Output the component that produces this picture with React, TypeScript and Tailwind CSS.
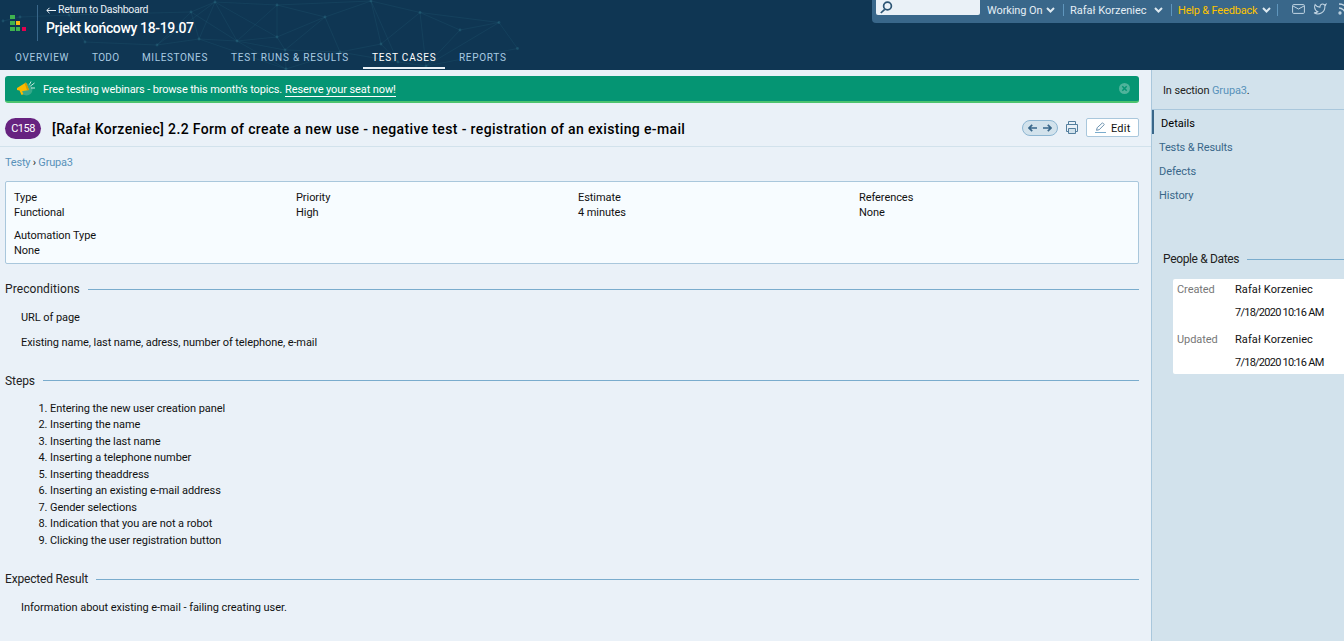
import React from "react";

const nodes: [number, number][] = [
  [3, 21], [20, 17], [69, 15], [85, 42], [191, 12], [215, 2], [277, 5], [277, 37], [237, 41],
  [285, 50], [199, 39], [157, 45], [325, 17], [371, 1], [420, 12.5], [460, 30], [499, 22.5],
  [517.5, 48.5], [381, 44], [340, 52], [398, 62], [426, 66], [286, 69],
];
const links: [number, number][] = [
  [0, 1], [1, 2], [2, 3], [2, 4], [3, 11], [4, 11], [4, 5], [4, 10], [5, 6], [5, 8], [5, 11], [5, 10], [6, 7], [6, 12],
  [7, 8], [8, 10], [8, 9], [7, 9], [10, 11], [12, 7], [12, 19], [12, 13], [12, 9], [13, 18], [13, 14], [13, 6],
  [14, 18], [14, 15], [14, 16], [15, 16], [16, 17], [15, 21], [14, 21], [18, 19], [18, 20], [20, 21], [17, 21],
  [19, 20], [9, 19], [9, 22], [8, 22], [10, 22], [13, 20], [19, 22], [16, 21], [6, 8], [4, 8], [5, 7],
];

const Network = () => (
  <svg className="pointer-events-none absolute left-0 top-0" width="530" height="70">
    {links.map(([a, b], i) => (
      <line key={i} x1={nodes[a][0]} y1={nodes[a][1]} x2={nodes[b][0]} y2={nodes[b][1]} stroke="#2d7186" strokeOpacity="0.18" />
    ))}
    {nodes.map(([x, y], i) => (
      <circle key={i} cx={x} cy={y} r="1.4" fill="#2d7186" fillOpacity="0.4" />
    ))}
  </svg>
);

const Chevron = () => (
  <svg className="shrink-0" width="9" height="6" viewBox="0 0 9 6" fill="none" stroke="#dce8f0" strokeWidth="2">
    <path d="M1 1l3.5 3.5L8 1" />
  </svg>
);

const Section = ({ title, className, titleClass }: { title: string; className?: string; titleClass?: string }) => (
  <div className={`flex h-5 items-center gap-2 ${className ?? ""}`}>
    <h2 className={`whitespace-nowrap text-[12px] leading-5 text-[#222] ${titleClass ?? ""}`}>{title}</h2>
    <div className="h-px flex-1 bg-[#7aaccd]" />
  </div>
);

const fields = [
  ["Type", "Functional"],
  ["Priority", "High"],
  ["Estimate", "4 minutes"],
  ["References", "None"],
  ["Automation Type", "None"],
];

const steps = [
  "Entering the new user creation panel",
  "Inserting the name",
  "Inserting the last name",
  "Inserting a telephone number",
  "Inserting theaddress",
  "Inserting an existing e-mail address",
  "Gender selections",
  "Indication that you are not a robot",
  "Clicking the user registration button",
];

const Header = () => (
  <header className="relative flex h-[70px] shrink-0 justify-between bg-[#0f3653]">
    <Network />
    <div className="relative flex flex-col">
      <div className="flex h-[45px] pt-[5px]">
        <svg className="ml-[10px] mt-[10px]" width="17" height="16" shapeRendering="crispEdges">
          <path d="M0 0h5v4H0zM0 6h5v4H0zM0 12h5v4H0zM6 12h4v4H6z" fill="#3fb34f" />
          <path d="M6 6h4v4H6z" fill="#fdb813" />
          <path d="M12 12h4v4h-4z" fill="#e4004f" />
        </svg>
        <div className="ml-[10px] h-[36px] w-px bg-[#39678a]" />
        <div className="ml-2 -mt-[2px] text-white">
          <a className="flex h-[14px] items-center text-[10.5px] leading-[14px] tracking-[-0.3px] text-[#eaf1f7]">
            <svg className="mr-[2px]" width="10" height="7" viewBox="0 0 10 7" fill="none" stroke="currentColor">
              <path d="M10 3.500H1M3.500 .8L.8 3.500l2.700 2.700" />
            </svg>
            Return to Dashboard
          </a>
          <h1 className="mt-[2px] text-[14px] font-medium leading-[18px] tracking-[-0.350px]">Prjekt końcowy 18-19.07</h1>
        </div>
      </div>
      <nav className="flex h-[24px] items-center whitespace-nowrap pl-[15px] text-[10px] tracking-[0.700px] text-[#a9cbe2]">
        <a className="w-[77px]">OVERVIEW</a>
        <a className="w-[50px] tracking-[0.300px]">TODO</a>
        <a className="w-[89px] tracking-[0.600px]">MILESTONES</a>
        <a className="w-[132px] tracking-[0.800px]">TEST RUNS &amp; RESULTS</a>
        <a className="h-[24px] w-[82px] border-b-2 border-[#eaf1f7] pl-[9px] leading-[25px] tracking-[0.8px] text-white">TEST CASES</a>
        <a className="ml-[14px]">REPORTS</a>
      </nav>
    </div>
    <div className="flex h-[23px] w-[472px] overflow-hidden rounded-bl-sm bg-[#39678a] pl-1 text-[11px] tracking-normal text-[#e4eef5]">
      <div className="h-[15px] w-[104px] shrink-0 rounded-b-xs bg-[#eaf1f7]">
        <svg className="ml-1 mt-px" width="13" height="14" viewBox="0 0 13 14" fill="none" stroke="#2b5473" strokeWidth="1.700">
          <circle cx="7.500" cy="5" r="3.900" />
          <path d="M4.700 8.300L.8 12" />
        </svg>
      </div>
      <div className="flex h-5 shrink-0 items-center whitespace-nowrap">
        <span className="ml-[7px] w-[59px] pt-[2px] tracking-[-0.1px]">Working On</span><Chevron />
        <i className="ml-2 mr-[6px] h-3 w-px bg-[#5f96bd]" />
        <span className="w-[84px] pt-[2px]">Rafał Korzeniec</span><Chevron />
        <i className="ml-2 mr-[6px] h-3 w-px bg-[#5f96bd]" />
        <span className="w-[84px] pt-[2px] tracking-[-0.180px] text-[#fdc400]">Help &amp; Feedback</span><Chevron />
        <i className="ml-[6px] mr-[14px] h-3 w-px bg-[#5f96bd]" />
        <svg width="13" height="10" viewBox="0 0 13 10" fill="none" stroke="#c2d5e3" className="-mt-[3px]">
          <rect x=".6" y=".6" width="11.800" height="8.800" rx="1" />
          <path d="M1 2l5.500 3L12 2" />
        </svg>
        <svg className="-mt-[3px] ml-[8px]" width="14" height="12" viewBox="0 0 24 22" fill="none" stroke="#c2d5e3" strokeWidth="1.900">
          <path d="M23 2a11 11 0 0 1-3.140 1.530A4.480 4.480 0 0 0 12 6.530v1A10.700 10.700 0 0 1 3 3s-4 9 5 13a11.600 11.600 0 0 1-7 2c9 5 20 0 20-11.500 0-.28 0-.56-.1-.83A7.700 7.700 0 0 0 23 2z" />
        </svg>
        <svg className="-mt-[3px] ml-[11px]" width="12" height="12" viewBox="0 0 12 12" fill="none" stroke="#c2d5e3" strokeWidth="1.300">
          <path d="M1 1a10 10 0 0 1 10 10M1 5a6 6 0 0 1 6 6" />
          <circle cx="2" cy="10" r="1" />
        </svg>
      </div>
    </div>
  </header>
);

const Banner = () => (
  <div className="ml-[5px] mr-[12px] flex h-[27px] items-center rounded-[3px] border-b-2 border-[#4cc36f] bg-[#059573] pl-[11px] pr-[9px] text-[11px] text-white">
    <svg width="19" height="17" viewBox="0 0 19 17">
      <circle cx="10.500" cy="9.500" r="6" fill="#36a88b" />
      <path d="M1 8L10 2.500l3 7.500-7 1.200 1.500 3-2 .8-2-4.500L1 10z" fill="#fbb900" />
      <path d="M10 2.500l3 7.500-2 .3-2.300-7z" fill="#d79b00" />
      <path d="M13.500 4.500l1.500-3M14.500 6l4-3M15 8h4" stroke="#c9e8df" strokeWidth="1" />
    </svg>
    <span className="ml-2 pt-[3px] tracking-[-0.150px]">Free testing webinars - browse this month’s topics.</span>
    <a className="ml-[3px] mt-[3px] border-b border-white leading-[12px] tracking-[-0.1px]">Reserve your seat now!</a>
    <svg className="ml-auto" width="11" height="11" viewBox="0 0 11 11">
      <circle cx="5.500" cy="5.500" r="5.500" fill="#4fb39b" />
      <path d="M3.300 3.300l4.400 4.400M7.700 3.300L3.300 7.700" stroke="#059573" strokeWidth="1.500" />
    </svg>
  </div>
);

const Sidebar = () => (
  <aside className="w-[193px] shrink-0 overflow-hidden border-l border-[#a9c7dc] bg-[#d2e2ec] text-[11px]">
    <div className="h-[40px] border-b border-[#a9c7dc] pl-[11px] leading-[41px] tracking-[-0.130px] text-[#222]">
      In section <a className="text-[#5992ba]">Grupa3</a>.
    </div>
    <nav className="leading-[27px] text-[#39678a]">
      <a className="block h-6 border-l-2 border-[#39678a] pl-[7px] tracking-[0.050px] text-black">Details</a>
      <a className="block h-6 pl-[7px] tracking-[-0.130px]">Tests &amp; Results</a>
      <a className="block h-6 pl-[7px]">Defects</a>
      <a className="block h-6 pl-[7px]">History</a>
    </nav>
    <Section title="People & Dates" className="mt-[43px] pl-[11px]" titleClass="tracking-[-0.350px]" />
    <dl className="ml-[21px] mt-[10px] grid h-[95px] grid-cols-[58px_1fr] grid-rows-[23px_27px_23px_22px] whitespace-nowrap rounded-l-xs bg-white pl-1 leading-[21px] text-[#111]">
      <dt className="text-[#777]">Created</dt><dd className="tracking-[0.090px]">Rafał Korzeniec</dd>
      <dt /><dd className="tracking-[-0.750px]">7/18/2020 10:16 AM</dd>
      <dt className="text-[#777]">Updated</dt><dd className="tracking-[0.090px]">Rafał Korzeniec</dd>
      <dt /><dd className="tracking-[-0.750px]">7/18/2020 10:16 AM</dd>
    </dl>
  </aside>
);

export default function App() {
  return (
    <div className="flex h-[641px] w-[1344px] flex-col overflow-hidden bg-[#eaf1f8] font-['Roboto','Liberation_Sans',sans-serif] text-[11px] tracking-[-0.070px] text-[#111]">
      <Header />
      <div className="flex min-h-0 flex-1">
        <main className="flex-1 pt-[6px]">
          <Banner />
          <div className="flex h-[44px] items-center border-b border-[#d2e2ec] pl-[5px] pr-[12px] pt-[8px]">
            <span className="h-[21px] w-9 rounded-full bg-[#672380] text-center text-[11px] leading-[22px] tracking-[-0.500px] text-white">C158</span>
            <h1 className="ml-[11px] whitespace-nowrap pt-px text-[14px] font-medium tracking-[0.360px] text-black">
              [Rafał Korzeniec] 2.2 Form of create a new use - negative test - registration of an existing e-mail
            </h1>
            <div className="-mt-[2px] ml-auto flex items-center">
              <span className="flex h-4 w-9 items-center justify-between rounded-full border border-[#8db6d2] bg-[#d2e2ec] px-[5px]">
                <svg width="9" height="8" viewBox="0 0 9 8" fill="none" stroke="#39678a" strokeWidth="1.700"><path d="M9 4H1M4.200 .8L1 4l3.200 3.200" /></svg>
                <svg width="9" height="8" viewBox="0 0 9 8" fill="none" stroke="#39678a" strokeWidth="1.700"><path d="M0 4h8M4.800 .8L8 4 4.800 7.200" /></svg>
              </span>
              <svg className="ml-2" width="12" height="13" viewBox="0 0 12 13" fill="none" stroke="#547f9e">
                <path d="M2.500 3.500v-3h7v3M2.500 10.500h-2v-7h11v7h-2" />
                <path d="M2.500 7.500h7v5h-7z" fill="#d2e2ec" />
              </svg>
              <button className="ml-2 flex h-[19px] w-[53px] items-center rounded-xs border border-[#a9c7dc] bg-white pl-2 text-[11px] text-[#111]">
                <svg width="11" height="11" viewBox="0 0 11 11" fill="none" stroke="#6d93b0">
                  <path d="M1.500 8.300l.7-2.600L7.500 .8 9.300 2.600 4.200 7.700z" />
                  <path d="M0 10.500h11" stroke="#7aaccd" />
                </svg>
                <span className="ml-[5px] pt-[3px] tracking-[0.200px]">Edit</span>
              </button>
            </div>
          </div>
          <div className="h-[34px] pl-[5px] leading-[31px] tracking-[-0.220px] text-[#5992ba]">
            Testy <span className="text-[#222]">›</span> Grupa3
          </div>
          <div className="ml-[5px] mr-[12px] grid h-[83px] grid-cols-[282px_282px_281px_1fr] content-start gap-y-2 rounded-xs border border-[#a9c7dc] bg-[#f7fcff] pl-2 pt-2 leading-[15px]">
            {fields.map(([label, value]) => (
              <div key={label}><div>{label}</div><div>{value}</div></div>
            ))}
          </div>
          <div className="ml-[5px] mr-[12px]">
            <Section title="Preconditions" className="mt-[15px]" titleClass="tracking-[0.080px]" />
            <div className="pl-4 pt-[11px] leading-4">
              <p>URL of page</p>
              <p className="mt-[9px] tracking-[-0.080px]">Existing name, last name, adress, number of telephone, e-mail</p>
            </div>
            <Section title="Steps" className="mt-[19px]" titleClass="pt-px" />
            <ol className="mt-[10.900px] list-decimal pl-[45px] leading-[16.450px]">
              {steps.map((s) => <li key={s}>{s}</li>)}
            </ol>
            <Section title="Expected Result" className="mt-[20.050px]" titleClass="tracking-[-0.180px]" />
            <p className="pl-4 pt-[11px] leading-4 tracking-[-0.050px]">Information about existing e-mail - failing creating user.</p>
          </div>
        </main>
        <Sidebar />
      </div>
    </div>
  );
}
